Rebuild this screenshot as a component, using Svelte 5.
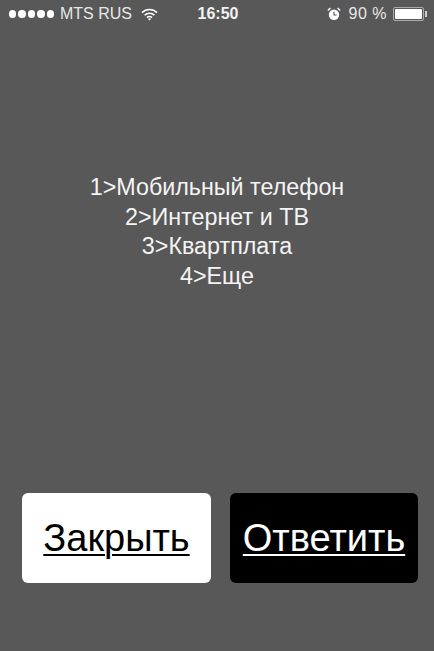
<script>
const options = ["1>Мобильный телефон", "2>Интернет и ТВ", "3>Квартплата", "4>Еще"]
</script>

<div class="screen">
	<header class="status">
		<div class="left">
			<span class="dots">
				{#each Array(5) as _}
					<i></i>
				{/each}
			</span>
			<span class="carrier">MTS RUS</span>
			<svg class="wifi" width="17" height="13" viewBox="0 0 17 13">
				<path d="M1 4.6 A10.6 10.6 0 0 1 16 4.6" />
				<path d="M3.6 7.2 A7 7 0 0 1 13.4 7.2" />
				<path d="M6 9.6 A3.5 3.5 0 0 1 11 9.6" />
				<path class="tip" d="M8.5 12.6 L6.9 11 A2.3 2.3 0 0 1 10.1 11 Z" />
			</svg>
		</div>
		<span class="time">16:50</span>
		<div class="right">
			<svg class="alarm" width="14" height="14" viewBox="0 0 14 14">
				<circle cx="7" cy="7.8" r="5.2" fill="#fff" />
				<path d="M7 4.8V8H9.6" fill="none" stroke="#555" stroke-width="1.1" />
				<path d="M0.8 3.4 L3.4 1 M13.2 3.4 L10.6 1" fill="none" stroke="#fff" stroke-width="1.3" />
			</svg>
			<span class="percent">90 %</span>
			<span class="battery"><b></b></span>
		</div>
	</header>

	<main class="menu">
		{#each options as option}
			<div>{option}</div>
		{/each}
	</main>

	<footer class="actions">
		<button class="close">Закрыть</button>
		<button class="reply">Ответить</button>
	</footer>
</div>

<style>
:global(body) {
	margin: 0;
}

.screen {
	width: 434px;
	height: 651px;
	background: #585858;
	font-family: "Liberation Sans", Arial, sans-serif;
	color: #fff;
	display: flex;
	flex-direction: column;
	overflow: hidden;
}

.status {
	height: 28px;
	padding: 0 7px 0 9px;
	display: grid;
	grid-template-columns: 1fr auto 1fr;
	align-items: center;
	font-size: 16px;
}

.left,
.right {
	display: flex;
	align-items: center;
}

.right {
	justify-content: flex-end;
}

.dots {
	display: flex;
	gap: 2px;
}

.dots i {
	width: 7.4px;
	height: 7.4px;
	border-radius: 50%;
	background: #fff;
}

.carrier {
	margin-left: 6px;
	color: #e8e8e8;
}

.wifi {
	margin-left: 9px;
}

.wifi path {
	fill: none;
	stroke: #fff;
	stroke-width: 1.6;
}

.wifi .tip {
	fill: #fff;
	stroke: none;
}

.time {
	font-weight: bold;
	color: #f2f2f2;
}

.percent {
	margin-left: 8px;
	color: #e8e8e8;
	letter-spacing: 0.5px;
}

.battery {
	margin-left: 6px;
	position: relative;
	width: 31px;
	height: 14px;
	box-sizing: border-box;
	border: 1px solid #aaa;
	border-radius: 2px;
	padding: 1px;
	display: flex;
	margin-right: 3px;
}

.battery b {
	flex: 1;
	background: #fff;
	border-radius: 1px;
}

.battery::after {
	content: "";
	position: absolute;
	right: -4px;
	top: 3px;
	width: 2px;
	height: 6px;
	background: #ccc;
}

.menu {
	margin-top: 145px;
	text-align: center;
	font-size: 23.3px;
	line-height: 29.7px;
	color: #f4f4f4;
}

.actions {
	margin-top: auto;
	margin-bottom: 68px;
	padding: 0 16px 0 22px;
	display: flex;
	justify-content: space-between;
}

button {
	height: 90px;
	padding: 0;
	border: none;
	border-radius: 6px;
	font-family: inherit;
	font-size: 38px;
	text-decoration: underline;
	text-decoration-thickness: 2px;
	text-underline-offset: 3px;
}

.close {
	width: 189px;
	background: #fff;
	color: #000;
}

.reply {
	width: 188px;
	background: #000;
	color: #fff;
}
</style>
